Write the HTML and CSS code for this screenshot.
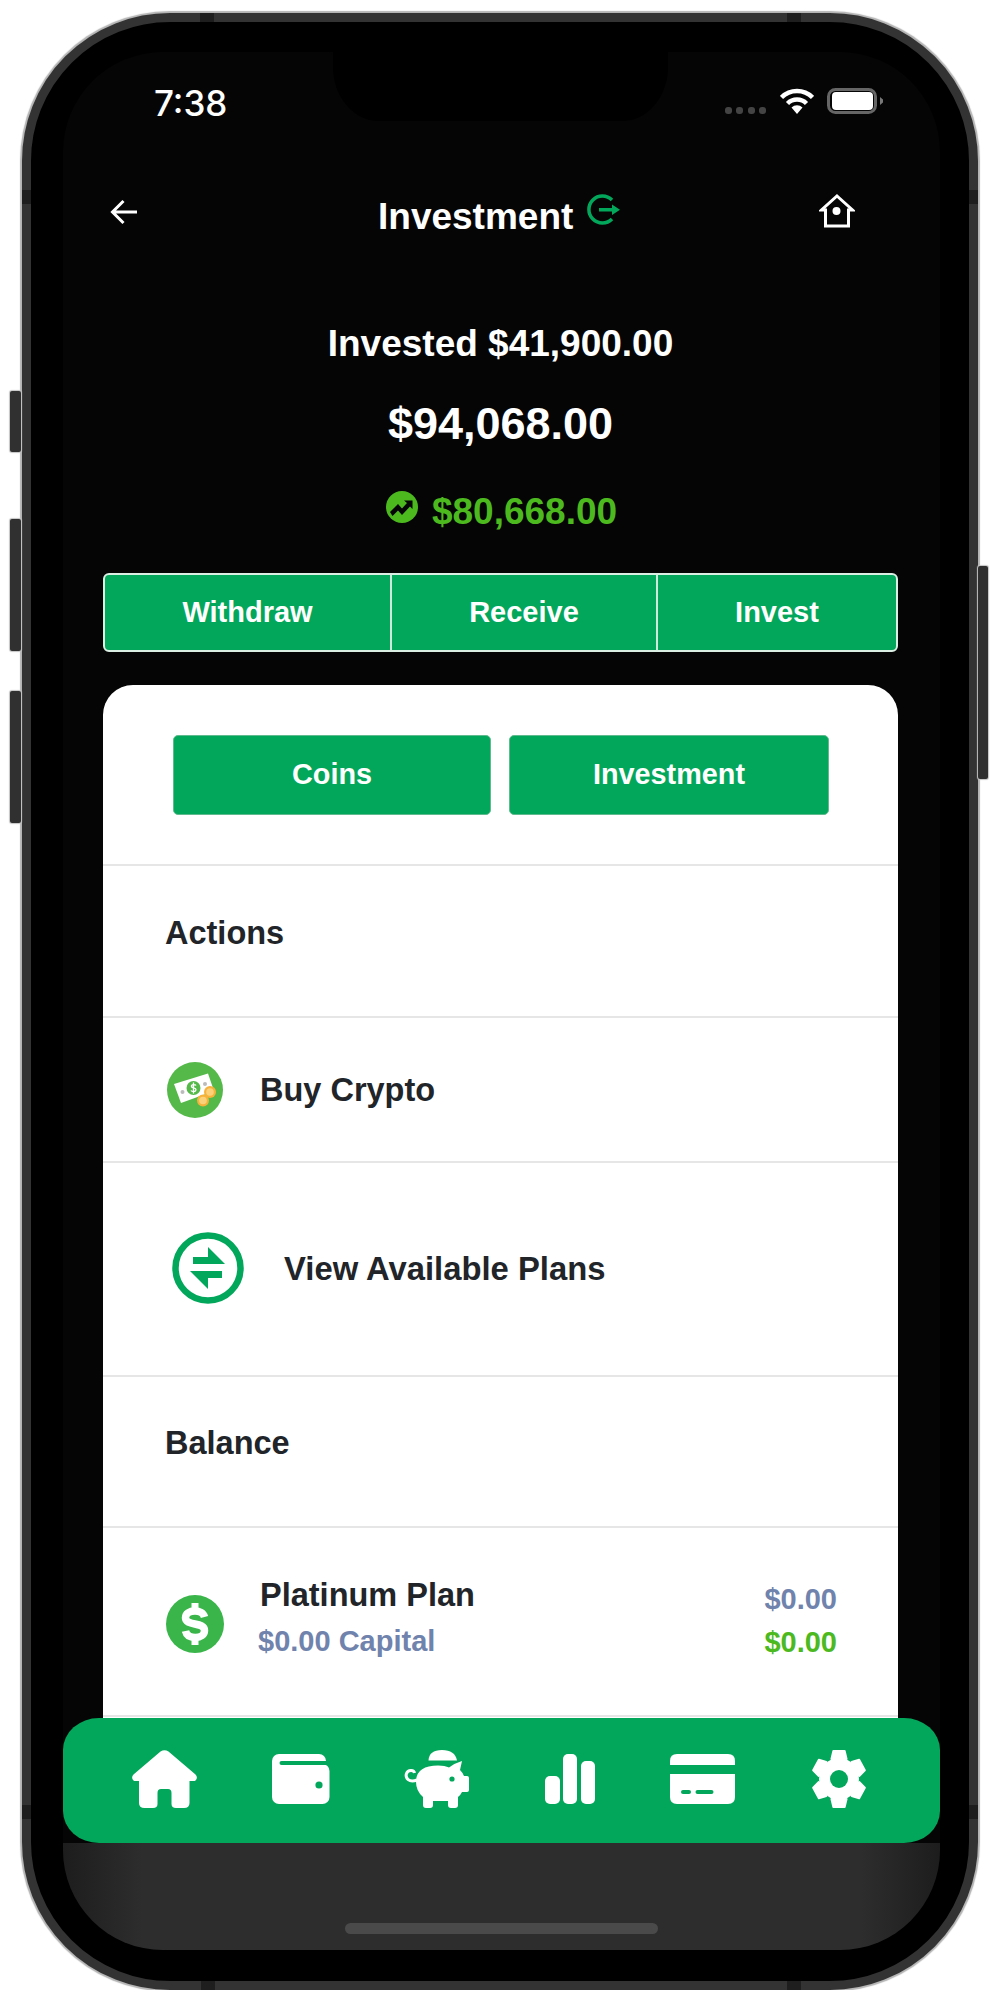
FILE: index.html
```html
<!DOCTYPE html>
<html lang="en">
<head>
<meta charset="utf-8">
<title>Investment</title>
<link rel="stylesheet" href="styles.css">
</head>
<body>
<div class="phone">
  <span class="side vol-mute"></span>
  <span class="side vol-up"></span>
  <span class="side vol-down"></span>
  <span class="side power"></span>
  <span class="ant ant-t1"></span><span class="ant ant-t2"></span>
  <span class="ant ant-b1"></span><span class="ant ant-b2"></span>
  <span class="ant ant-l1"></span><span class="ant ant-r1"></span>
  <span class="ant ant-l2"></span><span class="ant ant-r2"></span>
  <div class="screen">
    <div class="notch"></div>
    <div class="status">
      <span class="time">7:38</span>
      <div class="status-icons">
        <div class="signal"><i></i><i></i><i></i><i></i></div>
        <svg class="wifi" width="34" height="26" viewBox="0 0 34 26"><path d="M1.500 9.500A22 22 0 0 1 32.500 9.500M7.500 15.500A13.500 13.500 0 0 1 26.500 15.500" fill="none" stroke="#fff" stroke-width="4.500"/><path d="M17 26L11.500 19.500A8 8 0 0 1 22.500 19.500Z" fill="#fff"/></svg>
        <svg class="battery" width="56" height="26" viewBox="0 0 56 26"><rect x="1.500" y="1.500" width="47" height="23" rx="7" fill="none" stroke="#666" stroke-width="3"/><rect x="5" y="4" width="41" height="18" rx="4" fill="#fff"/><path d="M53 9L56 11.500V14.500L53 17Z" fill="#777"/></svg>
      </div>
    </div>
    <header class="topbar">
      <svg class="back" width="27" height="26" viewBox="0 0 27 26"><path d="M27 13H3M13.500 2L2.500 13L13.500 24" fill="none" stroke="#fff" stroke-width="3"/></svg>
      <div class="title-group">
        <h1 class="title">Investment</h1>
        <svg class="title-icon" width="33" height="33" viewBox="0 0 33 33"><path d="M25 6A13.500 13.500 0 1 0 25 25" fill="none" stroke="#03a75b" stroke-width="3.500"/><path d="M12 14H25V10.500L33 15.800L25 21V17.500H12Z" fill="#03a75b"/></svg>
      </div>
      <svg class="home-btn" width="36" height="34" viewBox="0 0 36 34"><path d="M18 2L33.500 16H29.500V32H6.500V16H2.500Z" fill="none" stroke="#fff" stroke-width="3" stroke-linejoin="miter"/><circle cx="17.500" cy="17" r="4" fill="#fff"/></svg>
    </header>

    <p class="invested">Invested $41,900.00</p>
    <p class="total">$94,068.00</p>
    <div class="profit">
      <svg class="trend" width="32" height="32" viewBox="0 0 32 32"><circle cx="16" cy="16" r="16" fill="#4cb91f"/><path d="M4 21L12 13L16 17.500L21 12L18 9.500H26.500V18L24 15.500L16 24L12 19.500L6.500 25Z" fill="#050505"/></svg>
      <span>$80,668.00</span>
    </div>

    <div class="actions-bar">
      <div class="act act-1">Withdraw</div>
      <div class="act act-2">Receive</div>
      <div class="act act-3">Invest</div>
    </div>

    <main class="card">
      <div class="tabs">
        <div class="tab tab-1">Coins</div>
        <div class="tab tab-2">Investment</div>
      </div>
      <div class="row row-label row-actions">Actions</div>
      <div class="row row-buy">
        <svg width="56" height="56" viewBox="0 0 56 56"><circle cx="28" cy="28" r="28" fill="#55b94a"/><path d="M7 22L41 11.500L47 29L14 41Z" fill="#fff"/><circle cx="26.500" cy="26" r="7" fill="#55b94a"/><path d="M29 23.500C28 22 24 22.500 24.500 24.500C25 26.500 29 25.500 29 27.800C29 30 25 30 24 28.500M26.500 20.500V31.500" fill="none" stroke="#fff" stroke-width="1.300"/><circle cx="15.500" cy="30" r="2" fill="#bbb"/><circle cx="38" cy="22" r="2" fill="#bbb"/><circle cx="43" cy="30" r="6" fill="#f7b23b"/><circle cx="43" cy="30" r="3.800" fill="#fbd27a"/><circle cx="36" cy="38.500" r="6" fill="#f7b23b"/><circle cx="36" cy="38.500" r="3.800" fill="#fbd27a"/></svg>
        <span class="row-text">Buy Crypto</span>
      </div>
      <div class="row row-plans">
        <svg width="72" height="72" viewBox="0 0 72 72"><circle cx="36" cy="36" r="32.500" fill="none" stroke="#03a75b" stroke-width="6.500"/><path d="M21 25H36V15L53 32H21ZM18 39H50V46H36V57Z" fill="#03a75b"/></svg>
        <span class="row-text">View Available Plans</span>
      </div>
      <div class="row row-label row-balance">Balance</div>
      <div class="row row-plan">
        <svg class="plan-icon" width="58" height="58" viewBox="0 0 58 58"><circle cx="29" cy="29" r="29" fill="#39b54a"/><path d="M38.500 22C37.500 18 33.500 16 29 16C23.500 16 19.500 18.500 19.500 22.800C19.500 31.500 38.500 26.500 38.500 35.500C38.500 39.800 34.500 42.500 29.500 42.500C24.500 42.500 20.500 40.500 19.500 36" fill="none" stroke="#fff" stroke-width="7.500"/><path d="M29 8V15M29 43V50" fill="none" stroke="#fff" stroke-width="7"/></svg>
        <div class="plan-info">
          <div class="plan-name">Platinum Plan</div>
          <div class="plan-capital">$0.00 Capital</div>
        </div>
        <div class="plan-values">
          <div class="val-blue">$0.00</div>
          <div class="val-green">$0.00</div>
        </div>
      </div>
    </main>

    <nav class="tabbar">
      <svg width="65" height="58" viewBox="0 0 65 58"><path d="M28.500 1.500Q32.500 -1 36.500 1.500L63.500 24.500Q66.500 28 63 31H57.500V53Q57.500 58 52 58H44Q39.500 58 39.500 54V43Q39.500 39 36 39H29Q25.500 39 25.500 43V54Q25.500 58 21 58H12.500Q7 58 7 53V31H2Q-1.500 28 1.500 24.500Z" fill="#fff"/></svg>
      <svg width="58" height="50" viewBox="0 0 58 50"><rect width="54" height="22" rx="7" fill="#fff"/><rect y="10" width="57.500" height="40" rx="7" fill="#fff"/><rect x="7.500" y="7" width="52" height="4" rx="2" fill="#03a75b"/><circle cx="47" cy="31" r="3.600" fill="#03a75b"/></svg>
      <svg width="65" height="58" viewBox="0 0 65 58"><path d="M23.500 10.500Q24 0 37 0Q50 0 52 10.500Z" fill="#fff"/><path d="M11 32Q11 15.500 33 15.500Q40 15.500 44 17.500Q50 13 57 11L55 20Q58 23 59 26H62Q64 26 64 28V40Q64 42 62 42H57Q55 46 53 47V55Q53 58 50 58H46Q43 58 43 55V51H28V55Q28 58 25 58H21Q18 58 18 55V47Q11 41 11 32Z" fill="#fff"/><path d="M12 30C4 33 0 28 1.500 23.500C3 19.500 9 19.500 9.500 23" fill="none" stroke="#fff" stroke-width="3"/><circle cx="47" cy="29" r="2.600" fill="#03a75b"/></svg>
      <svg width="50" height="50" viewBox="0 0 50 50"><rect y="22" width="15" height="28" rx="5" fill="#fff"/><rect x="18" width="14" height="50" rx="5" fill="#fff"/><rect x="36" y="7" width="14" height="43" rx="5" fill="#fff"/></svg>
      <svg width="65" height="50" viewBox="0 0 65 50"><path d="M0 7Q0 0 7 0H58Q65 0 65 7V11H0ZM0 20H65V43Q65 50 58 50H7Q0 50 0 43Z" fill="#fff"/><rect x="11" y="36" width="10" height="4" rx="2" fill="#03a75b"/><rect x="25.500" y="36" width="18" height="4" rx="2" fill="#03a75b"/></svg>
      <svg width="58" height="58" viewBox="-29 -29 58 58">
        <g transform="scale(.95 1)">
          <circle r="21" fill="#fff"/>
          <path d="M-8 -20L-6 -28H6L8 -20Z" fill="#fff" stroke="#fff" stroke-width="2" stroke-linejoin="round"/>
          <path d="M-8 -20L-6 -28H6L8 -20Z" transform="rotate(60)" fill="#fff" stroke="#fff" stroke-width="2" stroke-linejoin="round"/>
          <path d="M-8 -20L-6 -28H6L8 -20Z" transform="rotate(120)" fill="#fff" stroke="#fff" stroke-width="2" stroke-linejoin="round"/>
          <path d="M-8 -20L-6 -28H6L8 -20Z" transform="rotate(180)" fill="#fff" stroke="#fff" stroke-width="2" stroke-linejoin="round"/>
          <path d="M-8 -20L-6 -28H6L8 -20Z" transform="rotate(240)" fill="#fff" stroke="#fff" stroke-width="2" stroke-linejoin="round"/>
          <path d="M-8 -20L-6 -28H6L8 -20Z" transform="rotate(300)" fill="#fff" stroke="#fff" stroke-width="2" stroke-linejoin="round"/>
        </g>
        <circle r="9" fill="#03a75b"/>
      </svg>
    </nav>
    <div class="home-area"><div class="home-indicator"></div></div>
  </div>
</div>
</body>
</html>
```

FILE: styles.css
```css
* { box-sizing: border-box; }
html, body { margin: 0; padding: 0; background: #fff; }
body { font-family: "Liberation Sans", Arial, sans-serif; }

.phone {
  position: relative;
  margin: 13px 0 0 22px;
  width: 956px;
  height: 1977px;
  padding: 30px 29px 31px 32px;
  background: #000;
  border: 9px solid #333;
  border-radius: 148px;
  box-shadow: 0 0 1px 2px #b4b4b4;
}

.side { position: absolute; background: #303030; box-shadow: 0 0 1px 1px #c4c4c4; border-radius: 2px; }
.vol-mute { left: -21px; top: 369px; width: 11px; height: 61px; }
.vol-up { left: -21px; top: 497px; width: 11px; height: 132px; }
.vol-down { left: -21px; top: 669px; width: 11px; height: 132px; }
.power { right: -19px; top: 544px; width: 10px; height: 213px; }

.ant { position: absolute; background: #1e1e1e; }
.ant-t1 { top: -9px; left: 169px; width: 14px; height: 9px; }
.ant-t2 { top: -9px; left: 756px; width: 14px; height: 9px; }
.ant-b1 { bottom: -9px; left: 170px; width: 14px; height: 9px; }
.ant-b2 { bottom: -9px; left: 756px; width: 14px; height: 9px; }
.ant-l1 { left: -9px; top: 168px; width: 9px; height: 14px; }
.ant-r1 { right: -9px; top: 168px; width: 9px; height: 14px; }
.ant-l2 { left: -9px; top: 1783px; width: 9px; height: 14px; }
.ant-r2 { right: -9px; top: 1783px; width: 9px; height: 14px; }

.screen {
  position: relative;
  width: 877px;
  height: 1898px;
  background: #050505;
  border-radius: 100px;
  overflow: hidden;
  display: flex;
  flex-direction: column;
  align-items: stretch;
}
.notch {
  position: absolute;
  left: 270px;
  top: 0;
  width: 335px;
  height: 69px;
  background: #000;
  border-radius: 0 0 46px 46px / 0 0 54px 54px;
}

.status {
  flex: none;
  height: 98px;
  padding: 0 57px 0 91px;
  display: flex;
  align-items: center;
  justify-content: space-between;
  color: #fff;
}
.time { margin-top: 4px; font-family: Inter, "Liberation Sans", sans-serif; font-weight: 500; font-size: 35px; line-height: 40px; }
.status-icons { display: flex; align-items: flex-end; gap: 13px; }
.signal { display: flex; gap: 4.500px; }
.signal i { display: block; width: 7px; height: 7px; border-radius: 3px; background: #444; }
.wifi { display: block; margin-left: 1px; }
.battery { display: block; }

.topbar {
  flex: none;
  height: 130px;
  padding: 0 85px 0 47px;
  display: grid;
  grid-template-columns: 268px auto 1fr;
  align-items: center;
}
.back { margin-top: -7px; }
.title-group { display: flex; align-items: center; gap: 14px; }
.title { margin: 4px 0 0; font-size: 37px; line-height: 50px; font-weight: 700; color: #fff; }
.title-icon { margin-top: -10px; }
.home-btn { justify-self: end; margin-top: -8px; }

.invested, .total { margin: 0; padding-right: 2px; text-align: center; font-weight: 700; color: #fff; }
.invested { margin-top: 39px; font-size: 37px; line-height: 50px; }
.total { margin-top: 25px; font-size: 45px; line-height: 60px; }
.profit {
  margin-top: 33px;
  display: flex;
  justify-content: center;
  align-items: center;
  gap: 14px;
  font-size: 37px;
  line-height: 50px;
  font-weight: 700;
  color: #4cb91f;
}
.trend { margin-top: -10px; }

.actions-bar {
  flex: none;
  margin: 36px 42px 0 40px;
  height: 79px;
  display: flex;
  background: #03a75b;
  border: 2px solid #dcefe5;
  border-radius: 6px;
  color: #fff;
  font-size: 29px;
  font-weight: 700;
}
.act { display: flex; align-items: center; justify-content: center; }
.act-1 { width: 287px; border-right: 2px solid #cfe9dc; }
.act-2 { width: 266px; border-right: 2px solid #cfe9dc; }
.act-3 { flex: 1; }

.card {
  flex: none;
  margin: 33px 42px 0 40px;
  height: 1033px;
  background: #fff;
  border-radius: 30px 30px 0 0;
  color: #212529;
  overflow: hidden;
}
.tabs {
  height: 181px;
  padding: 50px 0 0 70px;
  display: flex;
  gap: 18px;
  border-bottom: 2px solid #e6e6e6;
}
.tab {
  height: 80px;
  padding-bottom: 2px;
  display: flex;
  align-items: center;
  justify-content: center;
  background: #03a75b;
  border: 1px solid #5fbb8e;
  border-radius: 5px;
  color: #fff;
  font-size: 28.800px;
  font-weight: 700;
}
.tab-1 { width: 318px; }
.tab-2 { width: 320px; }

.row {
  display: flex;
  align-items: center;
  font-size: 32.500px;
  font-weight: 700;
  border-bottom: 2px solid #e6e6e6;
}
.row-text { margin-top: 2px; }
.row-label { padding-left: 62px; padding-bottom: 16px; }
.row-actions { height: 152px; }
.row-balance { height: 151px; }
.row-buy { height: 145px; padding-left: 64px; gap: 37px; }
.row-plans { height: 214px; padding-left: 69px; gap: 40px; padding-bottom: 3px; font-size: 32.800px; }
.row-plan {
  height: 189px;
  padding: 0 61px 0 63px;
  font-size: 29px;
}
.plan-icon { flex: none; margin-top: 4px; }
.plan-info { margin-left: 36px; flex: 1; margin-top: -7px; }
.plan-name { font-size: 32.500px; line-height: 46px; color: #212529; }
.plan-capital { margin-left: -2px; font-size: 29px; line-height: 46px; color: #6f83ad; }
.plan-values { text-align: right; line-height: 43px; margin-top: -1px; }
.val-blue { color: #6f83ad; }
.val-green { color: #4cb91f; }

.tabbar {
  flex: none;
  height: 125px;
  padding: 0 0 3px 69px;
  display: flex;
  align-items: center;
  gap: 75px;
  background: #03a75b;
  border-radius: 36px / 32px;
  position: relative;
}
.tabbar svg { display: block; overflow: visible; flex: none; }
.home-area {
  flex: 1;
  background: linear-gradient(90deg, #1d1d1d, #2d2d2d 9%, #2d2d2d 91%, #1d1d1d);
  display: flex;
  justify-content: center;
  padding-top: 80px;
}
.home-indicator { width: 313px; height: 11px; border-radius: 6px; background: #4a4a4a; }
```
